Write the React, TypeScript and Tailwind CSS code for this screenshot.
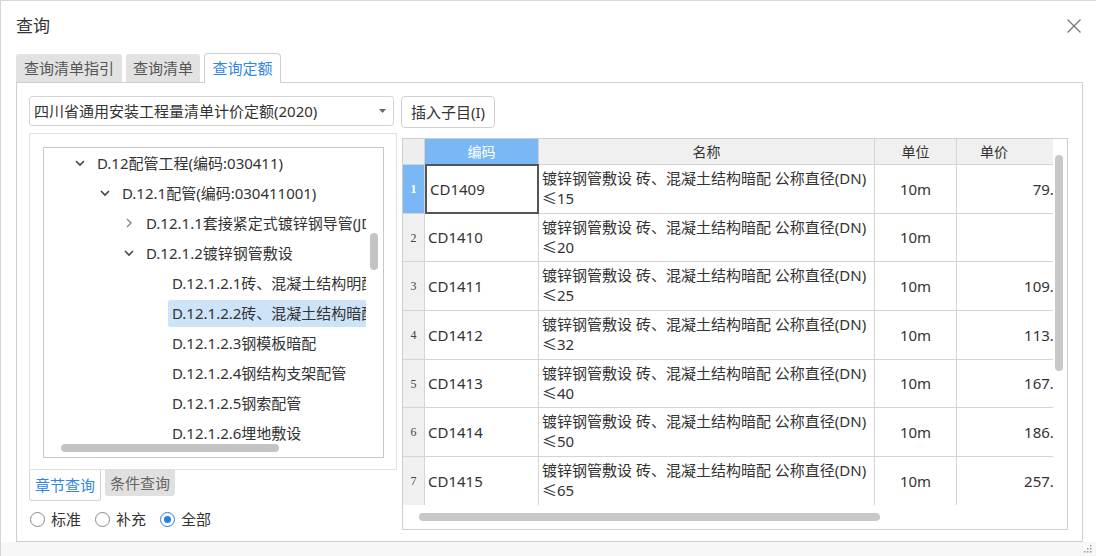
import React from 'react';

const rows = [
  { n: 1, code: 'CD1409', dn: '≤15', price: '79.95' },
  { n: 2, code: 'CD1410', dn: '≤20', price: '' },
  { n: 3, code: 'CD1411', dn: '≤25', price: '109.90' },
  { n: 4, code: 'CD1412', dn: '≤32', price: '113.40' },
  { n: 5, code: 'CD1413', dn: '≤40', price: '167.40' },
  { n: 6, code: 'CD1414', dn: '≤50', price: '186.70' },
  { n: 7, code: 'CD1415', dn: '≤65', price: '257.40' },
];

const tree = [
  { level: 0, icon: 'down', text: 'D.12配管工程(编码:030411)' },
  { level: 1, icon: 'down', text: 'D.12.1配管(编码:030411001)' },
  { level: 2, icon: 'right', text: 'D.12.1.1套接紧定式镀锌钢导管(JDG)' },
  { level: 2, icon: 'down', text: 'D.12.1.2镀锌钢管敷设' },
  { level: 3, icon: '', text: 'D.12.1.2.1砖、混凝土结构明配' },
  { level: 3, icon: '', text: 'D.12.1.2.2砖、混凝土结构暗配', selected: true },
  { level: 3, icon: '', text: 'D.12.1.2.3钢模板暗配' },
  { level: 3, icon: '', text: 'D.12.1.2.4钢结构支架配管' },
  { level: 3, icon: '', text: 'D.12.1.2.5钢索配管' },
  { level: 3, icon: '', text: 'D.12.1.2.6埋地敷设' },
];

const indent = ['pl-[30px]', 'pl-[55px]', 'pl-[79px]', 'pl-[124px]'];

function Chevron({ dir }: { dir: string }) {
  return (
    <svg width="12" height="12" viewBox="0 0 12 12" className="mr-[11px] shrink-0">
      {dir === 'down' ? (
        <path d="M2 4 L6 8 L10 4" fill="none" stroke="#444" strokeWidth="1.6" />
      ) : (
        <path d="M4 2 L8 6 L4 10" fill="none" stroke="#888" strokeWidth="1.4" />
      )}
    </svg>
  );
}

function Radio({ label, checked }: { label: string; checked?: boolean }) {
  return (
    <div className="flex items-center mr-[14px]">
      <span
        className={`w-[15px] h-[15px] rounded-full border flex items-center justify-center bg-white ${
          checked ? 'border-[#2a7de1]' : 'border-[#8a8a8a]'
        }`}
      >
        {checked && <span className="w-[7px] h-[7px] rounded-full bg-[#2a7de1]" />}
      </span>
      <span className="ml-[6px] text-[15px] text-[#333]">{label}</span>
    </div>
  );
}

export default function App() {
  return (
    <div
      className="w-[1096px] h-[556px] bg-white border-t border-l border-[#d6d6d6] overflow-hidden flex flex-col"
      style={{ fontFamily: '"Noto Sans", "Noto Sans CJK SC", sans-serif' }}
    >
      {/* title bar */}
      <div className="h-[50px] flex items-center justify-between pl-[15px] pr-[14px]">
        <span className="text-[17px] text-[#333]">查询</span>
        <svg width="16" height="16" viewBox="0 0 16 16">
          <path d="M1.5 1.5 L14.5 14.5 M14.5 1.5 L1.5 14.5" stroke="#777" strokeWidth="1.3" />
        </svg>
      </div>

      {/* top tabs */}
      <div className="flex items-end h-[31px] pl-[15px] gap-[4px]">
        <div className="h-[28px] w-[106px] flex items-center justify-center bg-[#e2e2e2] rounded-t-[3px] text-[15px] text-[#555]">
          查询清单指引
        </div>
        <div className="h-[28px] w-[74px] flex items-center justify-center bg-[#e2e2e2] rounded-t-[3px] text-[15px] text-[#555]">
          查询清单
        </div>
        <div className="h-[30px] w-[77px] flex items-center justify-center bg-white border border-b-0 border-[#cfcfcf] rounded-t-[4px] text-[15px] text-[#2f86e8] relative top-[1px]">
          查询定额
        </div>
      </div>

      {/* panel */}
      <div className="ml-[15px] w-[1067px] h-[460px] border border-[#cfcfcf] flex">
        {/* left column */}
        <div className="ml-[12px] w-[368px] flex flex-col pt-[13px]">
          <div className="h-[30px] w-[365px] border border-[#d4d4d4] rounded-[3px] flex items-center justify-between pl-[4px] pr-[7px]">
            <span className="text-[15px] text-[#333]">四川省通用安装工程量清单计价定额(2020)</span>
            <svg width="7" height="4" viewBox="0 0 7 4">
              <path d="M0 0 L7 0 L3.5 4 Z" fill="#666" />
            </svg>
          </div>

          <div className="mt-[7px] h-[337px] w-[368px] border border-[#e0e0e0] p-[13px]">
            <div className="relative h-[311px] w-[341px] border border-[#c8c8c8] overflow-hidden">
              <div className="w-[322px] overflow-hidden">
                {tree.map((t, i) => (
                  <div key={i} className={`h-[30px] flex items-center whitespace-nowrap ${indent[t.level]}`}>
                    {t.icon && <Chevron dir={t.icon} />}
                    <span
                      className={`text-[15px] text-[#333] h-[27px] flex items-center pr-[20px] ${
                        t.icon ? '' : 'pl-[4px]'
                      } ${t.selected ? 'bg-[#cde3f8] rounded-l-[3px]' : ''}`}
                    >
                      {t.text}
                    </span>
                  </div>
                ))}
              </div>
              <div className="absolute right-[5px] top-[85px] w-[8px] h-[37px] rounded-full bg-[#c4c4c4]" />
              <div className="absolute left-[17px] top-[296px] w-[218px] h-[8px] rounded-full bg-[#c4c4c4]" />
            </div>
          </div>

          <div className="flex items-start h-[31px]">
            <div className="h-[31px] w-[72px] border border-t-0 border-[#d4d4d4] rounded-b-[3px] bg-white flex items-center justify-center text-[15px] text-[#2f86e8]">
              章节查询
            </div>
            <div className="ml-[4px] h-[26px] w-[70px] bg-[#e0e0e0] rounded-b-[3px] flex items-center justify-center text-[15px] text-[#666]">
              条件查询
            </div>
          </div>

          <div className="flex items-center mt-[7px] ml-[1px]">
            <Radio label="标准" />
            <Radio label="补充" />
            <Radio label="全部" checked />
          </div>
        </div>

        {/* right column */}
        <div className="ml-[4px] flex flex-col pt-[13px]">
          <div className="h-[32px] w-[94px] border border-[#d0d0d0] rounded-[4px] flex items-center justify-center text-[15px] text-[#333]">
            插入子目(I)
          </div>

          <div className="mt-[10px] ml-[1px] w-[666px] h-[392px] border border-[#cfcfcf] relative overflow-hidden">
            <div className="w-[650px] overflow-hidden">
              <div className="w-[700px]">
                {/* header */}
                <div className="flex h-[26px] border-b border-[#d4d4d4] text-[14px] text-[#333]">
                  <div className="w-[22px] bg-[#eeeeee] border-r border-[#d4d4d4]" />
                  <div className="w-[114px] bg-[#7ab8f5] text-white flex items-center justify-center border-r border-[#d4d4d4]">
                    编码
                  </div>
                  <div className="w-[336px] bg-[#f0f0f0] flex items-center justify-center border-r border-[#d4d4d4]">
                    名称
                  </div>
                  <div className="w-[82px] bg-[#f0f0f0] flex items-center justify-center border-r border-[#d4d4d4]">
                    单位
                  </div>
                  <div className="w-[146px] bg-[#f0f0f0] flex items-center pl-[23px]">单价</div>
                </div>
                {rows.map((r) => (
                  <div key={r.n} className="flex h-[48.7px] border-b border-[#d4d4d4] text-[15px] text-[#333]">
                    <div
                      className={`w-[22px] border-r border-[#d4d4d4] flex items-center justify-center text-[12px] ${
                        r.n === 1 ? 'bg-[#7ab8f5] text-white font-bold' : 'bg-[#f0f0f0] text-[#444]'
                      }`}
                      style={{ fontFamily: '"Liberation Serif", serif' }}
                    >
                      {r.n}
                    </div>
                    <div
                      className={`w-[114px] flex items-center pl-[3px] ${
                        r.n === 1 ? 'border-2 border-[#555] -mt-[1px] h-[49.7px]' : 'border-r border-[#d4d4d4]'
                      }`}
                    >
                      {r.code}
                    </div>
                    <div className="w-[336px] border-r border-[#d4d4d4] pl-[3px] pt-[3px] leading-[20px] whitespace-nowrap overflow-hidden">
                      镀锌钢管敷设 砖、混凝土结构暗配 公称直径(DN)
                      <br />
                      {r.dn}
                    </div>
                    <div className="w-[82px] border-r border-[#d4d4d4] flex items-center justify-center">10m</div>
                    <div className="w-[146px] flex items-center justify-end pr-[32px]">{r.price}</div>
                  </div>
                ))}
                <div className="flex h-[20px]">
                  <div className="w-[22px] bg-[#f0f0f0] border-r border-[#d4d4d4]" />
                  <div className="w-[114px] border-r border-[#d4d4d4]" />
                  <div className="w-[336px] border-r border-[#d4d4d4]" />
                  <div className="w-[82px] border-r border-[#d4d4d4]" />
                </div>
              </div>
            </div>
            <div className="absolute right-[4px] top-[16px] w-[8px] h-[216px] rounded-full bg-[#c8c8c8]" />
            <div className="absolute left-[0px] bottom-[0px] w-[650px] h-[24px] bg-white flex items-center">
              <div className="ml-[16px] w-[461px] h-[8px] rounded-full bg-[#c8c8c8]" />
            </div>
          </div>
        </div>
      </div>

      {/* bottom strip */}
      <div className="flex-1 bg-[#f7f7f7] flex justify-end items-end pr-[4px] pb-[3px]">
        <svg width="8" height="8" viewBox="0 0 8 8">
          <rect x="6" y="0" width="1.5" height="1.5" fill="#999" />
          <rect x="3" y="3" width="1.5" height="1.5" fill="#999" />
          <rect x="6" y="3" width="1.5" height="1.5" fill="#999" />
          <rect x="0" y="6" width="1.5" height="1.5" fill="#999" />
          <rect x="3" y="6" width="1.5" height="1.5" fill="#999" />
          <rect x="6" y="6" width="1.5" height="1.5" fill="#999" />
        </svg>
      </div>
    </div>
  );
}
